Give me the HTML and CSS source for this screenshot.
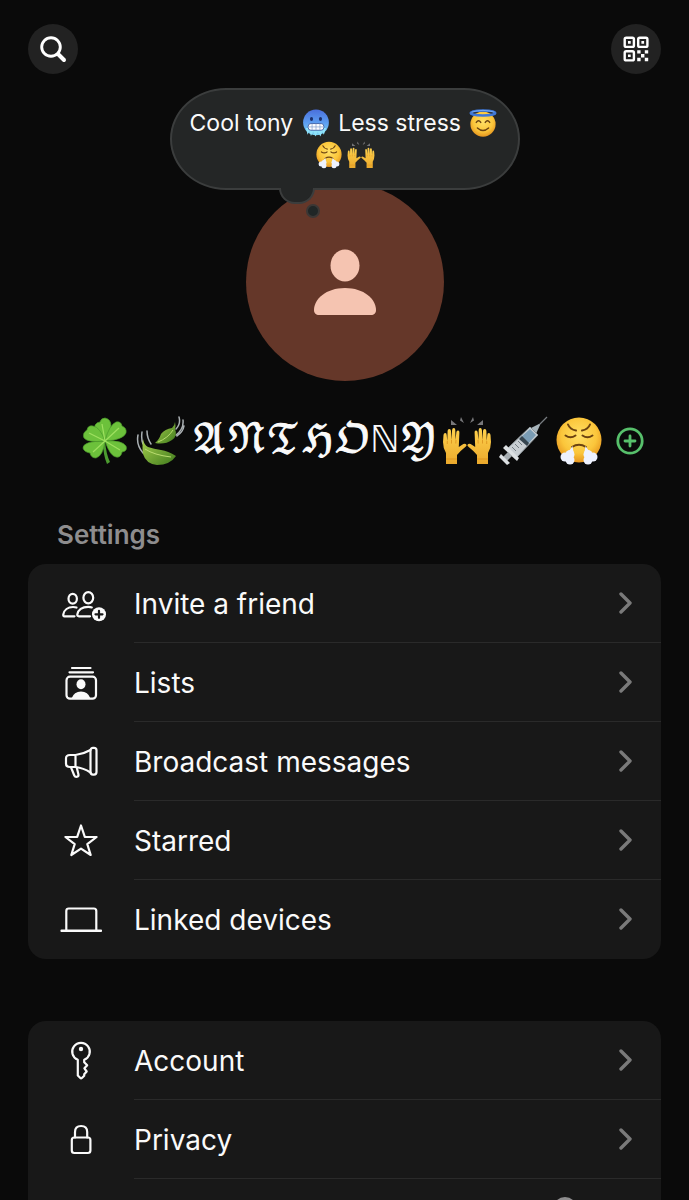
FILE: index.html
```html
<!DOCTYPE html>
<html lang="en">
<head>
    <meta charset="UTF-8">
    <meta name="viewport" content="width=device-width, initial-scale=1.0">
    <title>Settings</title>
    <link rel="stylesheet" href="styles.css">
</head>
<body>
    <!-- Shared drawings -->
    <svg class="sprite" aria-hidden="true">
        <defs>
            <radialGradient id="face" cx="50%" cy="40%" r="60%">
                <stop offset="0" stop-color="#ffe066"/>
                <stop offset=".65" stop-color="#fbc63b"/>
                <stop offset="1" stop-color="#e6951f"/>
            </radialGradient>
            <linearGradient id="cold" x1="0" y1="0" x2="0" y2="1">
                <stop offset="0" stop-color="#4a6fdc"/>
                <stop offset=".5" stop-color="#5c9cf0"/>
                <stop offset="1" stop-color="#7ed8f5"/>
            </linearGradient>
            <linearGradient id="leaf" x1="0" y1="0" x2="1" y2="1">
                <stop offset="0" stop-color="#a5cf4c"/>
                <stop offset="1" stop-color="#3f7a1d"/>
            </linearGradient>
            <linearGradient id="hand" x1="0" y1="0" x2="0" y2="1">
                <stop offset="0" stop-color="#ffd24d"/>
                <stop offset="1" stop-color="#eba92c"/>
            </linearGradient>
        </defs>
        <symbol id="triumph" viewBox="0 0 50 50">
            <circle cx="25" cy="24" r="22.500" fill="url(#face)"/>
            <g fill="none" stroke="#6b4210" stroke-width="2" stroke-linecap="round">
                <path d="M14 8.500q2 5 8 6M36 8.500q-2 5-8 6"/>
                <path d="M11.500 19.500q5 3.500 10 0M28.500 19.500q5 3.500 10 0"/>
                <path d="M18 31q7-4.500 14 0"/>
            </g>
            <g fill="#eef2ff">
                <path d="M18.500 30l1.500 9-7-1z"/>
                <path d="M31.500 30l-1.500 9 7-1z"/>
                <circle cx="11" cy="41" r="4.500"/><circle cx="16" cy="38.500" r="4.500"/><circle cx="16" cy="44" r="4.500"/>
                <circle cx="39" cy="41" r="4.500"/><circle cx="34" cy="38.500" r="4.500"/><circle cx="34" cy="44" r="4.500"/>
            </g>
        </symbol>
        <symbol id="hands" viewBox="0 0 50 50">
            <g fill="#77777a">
                <path d="M9 4l6 5-6 0zM19 1l3 6-4-2.500zM31 1l-3 6 4-2.500zM41 4l-6 5 6 0z"/>
            </g>
            <g id="hand-left">
                <path d="M4 48V37Q1 32 1 26l.5-7q.2-2 1.700-2t1.500 2l.6 6 .3-10q.1-2 1.700-2T9 15l.5 9 .6-10q.2-2 1.700-2t1.500 2l.2 10 .9-8q.3-1.800 1.700-1.600 1.400.2 1.300 2L16.800 31l3-2q3-2 4.500-.5 1 1.200-1 2.500-4 3-8.300 8v9z" fill="url(#hand)"/>
                <path d="M5.300 25v3M9.500 24v3.500M14 24l-.2 3.500M4 43h11" fill="none" stroke="#d98f1d" stroke-width=".8"/>
            </g>
            <use href="#hand-left" transform="translate(50 0) scale(-1 1)"/>
        </symbol>
    </svg>

    <main class="screen">
        <header class="topbar">
            <button class="round-btn" type="button" aria-label="Search">
                <svg width="28" height="28" viewBox="0 0 28 28" fill="none" stroke="#fff" stroke-linecap="round">
                    <circle cx="12" cy="12" r="9.300" stroke-width="2.900"/>
                    <path d="M19.500 19.500l5.500 5.500" stroke-width="4"/>
                </svg>
            </button>
            <button class="round-btn" type="button" aria-label="QR code">
                <svg width="26" height="26" viewBox="0 0 26 26">
                    <g fill="none" stroke="#fff" stroke-width="2.400">
                        <rect x="1.700" y="1.700" width="9.200" height="9.200" rx="1.500"/>
                        <rect x="15.200" y="1.700" width="9.200" height="9.200" rx="1.500"/>
                        <rect x="1.700" y="15.200" width="9.200" height="9.200" rx="1.500"/>
                    </g>
                    <path fill="#fff" d="M5 5h2.700v2.700H5zM18.400 5h2.700v2.700h-2.700zM5 18.400h2.700v2.700H5zM14.200 14.200h3.400v3.400h-3.400zM21.800 14.200h3.400v3.400h-3.400zM18 18h3.400v3.400H18zM14.200 21.800h3.400v3.400h-3.400zM21.800 21.800h3.400v3.400h-3.400z"/>
                </svg>
            </button>
        </header>

        <section class="profile">
            <div class="bubble">
                <p>Cool tony
                    <svg class="emoji" viewBox="0 0 50 50" role="img" aria-label="cold face">
                        <circle cx="25" cy="24" r="23" fill="url(#cold)"/>
                        <ellipse cx="17" cy="18" rx="2.800" ry="3.500" fill="#1c2f6b"/>
                        <ellipse cx="33" cy="18" rx="2.800" ry="3.500" fill="#1c2f6b"/>
                        <path d="M7 34l3 12 3-7 3 9 4-8 4 9 4-8 5 8 3-9 3 6 4-12z" fill="#8fe3fa"/>
                        <rect x="11" y="26" width="28" height="12" rx="5" fill="#fff" stroke="#35569e" stroke-width="1.500"/>
                        <path d="M11 32h28M18 26v12M25 26v12M32 26v12" stroke="#7d99c9" stroke-width="1.200"/>
                    </svg>
                    Less stress
                    <svg class="emoji" viewBox="0 0 50 50" role="img" aria-label="smiling face with halo">
                        <circle cx="25" cy="27" r="22.500" fill="url(#face)"/>
                        <ellipse cx="25" cy="7" rx="22" ry="4.500" fill="none" stroke="#3f78d8" stroke-width="4.500"/>
                        <path d="M5 5.500q20-6 40 0" fill="none" stroke="#7fb2f5" stroke-width="1.500"/>
                        <g fill="none" stroke="#6b4210" stroke-width="2.500" stroke-linecap="round">
                            <path d="M13 24q4-6 8 0M29 24q4-6 8 0M15 34q10 9 20 0"/>
                        </g>
                    </svg>
                    <svg class="emoji" role="img" aria-label="face with steam from nose"><use href="#triumph"/></svg><svg class="emoji" role="img" aria-label="raising hands"><use href="#hands"/></svg>
                </p>
                <span class="tail"></span>
                <span class="dot"></span>
            </div>
            <div class="avatar">
                <svg width="62" height="66" viewBox="0 0 62 66" fill="#f5c4b1">
                    <ellipse cx="31" cy="16.500" rx="14.500" ry="16"/>
                    <path d="M5 66c-3 0-5-1.500-5-5C0 50 12 39 31 39s31 11 31 22c0 3.500-2 5-5 5z"/>
                </svg>
            </div>
            <div class="name-row">
                <h1 class="name">
                    <svg class="emoji-lg" viewBox="0 0 50 50" role="img" aria-label="four leaf clover">
                        <path d="M25 24q1 14 5 22l-3 2q-4-9-4-23z" fill="#4c9c30"/>
                        <g fill="#6cc13b" stroke="#4a9a2b" stroke-width=".7">
                            <path d="M25 25Q13 17 15 9q2-3 5-3 1-4 5-4 6 1 6 8-1 7-6 15z"/>
                            <path d="M25 25Q29 9 36 6q5-1 6 4 5 2 4 7-3 7-21 8z"/>
                            <path d="M25 25q17-1 21 5 2 5-4 6-1 6-6 5-6-1-11-16z"/>
                            <path d="M25 25q-2 15-9 17-5 0-6-5-6-1-7-5 0-7 22-7z"/>
                            <path d="M25 25Q8 27 4 22q-2-5 3-8 1-5 6-4 7 1 12 15z"/>
                        </g>
                        <path d="M25 25L22 8M25 25l14-13M25 25l15 9M25 25L13 36M25 25L9 17" stroke="#9ee05f" stroke-width="1.200"/>
                    </svg>
                    <svg class="emoji-lg" viewBox="0 0 50 50" role="img" aria-label="leaf fluttering in wind">
                        <g fill="none" stroke="#aab0b3" stroke-width="1.500" stroke-linecap="round">
                            <path d="M2 19q-2 10 5 18M6 16q-1 7 1 12M11 15q0 7 4 13M43 1q2 7-3 12M47 4q1 9-7 15M48 10q-1 6-7 10"/>
                        </g>
                        <path d="M7 23q1 6 5 8 6 2 13 3 7 1 15 6-6 9-19 9-11-1-14-11-1-6 0-15z" fill="url(#leaf)"/>
                        <path d="M39 6q1 4 0 7 3 7-3 11-7 5-17 3 4-3 6-9 4-5 11-6 3-3 3-6z" fill="url(#leaf)"/>
                        <path d="M9 33q9 6 26 8M37 14q-5 8-15 12" fill="none" stroke="#b9dc70"/>
                    </svg>
                    <span class="letters">𝔄𝔑𝔗ℌ𝔒<span class="plain">ℕ</span>𝔜</span>
                    <svg class="emoji-lg" role="img" aria-label="raising hands"><use href="#hands"/></svg>
                    <svg class="emoji-lg" viewBox="0 0 50 50" role="img" aria-label="syringe">
                        <path d="M38 12L49 1" stroke="#777c80" stroke-width="1.200"/>
                        <path d="M33 12l8-4 1 1-4 9z" fill="#a6b3ba"/>
                        <path d="M32 11l8 8-21 22-9-9z" fill="#c8ced2" stroke="#8d969b"/>
                        <path d="M32 13l6 6-9 10-7-7z" fill="#7a9cb4"/>
                        <path d="M24 20l7 7-2 3-8-7z" fill="#36454f"/>
                        <path d="M17 28l4 4M20 25l4 4M14 31l4 4" stroke="#737d83"/>
                        <path d="M8 29l13 13-2 3L5 32z" fill="#dce0e2"/>
                        <path d="M10 36l4 4-5 5-4-4z" fill="#a6adb1"/>
                        <path d="M3 38l9 9-3 2-8-8z" fill="#dce0e2"/>
                    </svg>
                    <svg class="emoji-lg" role="img" aria-label="face with steam from nose"><use href="#triumph"/></svg>
                </h1>
                <button class="add-btn" type="button" aria-label="Add">
                    <svg width="28" height="28" viewBox="0 0 28 28" fill="none" stroke="#57c06b" stroke-width="2.800" stroke-linecap="round">
                        <circle cx="14" cy="14" r="12.200"/>
                        <path d="M14 9v10M9 14h10"/>
                    </svg>
                </button>
            </div>
        </section>

        <h2 class="section-title">Settings</h2>

        <ul class="card">
            <li>
                <a class="row" href="#invite">
                    <svg class="icon" viewBox="0 0 50 40">
                        <ellipse cx="16.700" cy="14.700" rx="4.200" ry="4.900"/>
                        <ellipse cx="32.300" cy="13.700" rx="4.900" ry="5.600"/>
                        <path d="M18.500 32.300H8.500Q7 32.300 7.300 30.500C8 26 12 23 17 23q2 0 3.500.6"/>
                        <path d="M34 32.300H23Q21 32.300 21.300 30.500C22 26 26 22.800 32.300 22.800q2 0 3.500.6"/>
                        <circle class="solid" cx="43" cy="30.300" r="7"/>
                        <path class="cut" d="M43 26.800v7M39.500 30.300h7"/>
                    </svg>
                    <span class="label">Invite a friend</span>
                    <svg class="chevron" viewBox="0 0 14 24"><path d="M2 3l9 9-9 9"/></svg>
                </a>
            </li>
            <li>
                <a class="row" href="#lists">
                    <svg class="icon" viewBox="0 0 50 40">
                        <path d="M16 5h18.500M13.500 9.300h23.500"/>
                        <rect x="10.500" y="13.700" width="29.500" height="22" rx="3.500"/>
                        <ellipse class="solid" cx="25" cy="21.300" rx="4.500" ry="5"/>
                        <path class="solid" d="M15.500 35.500q2.500-7 9.500-7t9.500 7z"/>
                    </svg>
                    <span class="label">Lists</span>
                    <svg class="chevron" viewBox="0 0 14 24"><path d="M2 3l9 9-9 9"/></svg>
                </a>
            </li>
            <li>
                <a class="row" href="#broadcast">
                    <svg class="icon" viewBox="0 0 50 40">
                        <path d="M19.500 13h-5.500q-4 0-4 3.500v5q0 3.500 4 3.500h5.500zM19.500 13q8-1 15-5M19.500 25q8 1 15 5.500"/>
                        <rect x="34.500" y="5.800" width="6" height="26.800" rx="2.500"/>
                        <path d="M15 25.300l3.300 8.200q.8 1.700 2.800 1.200 1.800-.6 1.300-2.500l-1.600-6.500"/>
                    </svg>
                    <span class="label">Broadcast messages</span>
                    <svg class="chevron" viewBox="0 0 14 24"><path d="M2 3l9 9-9 9"/></svg>
                </a>
            </li>
            <li>
                <a class="row" href="#starred">
                    <svg class="icon" viewBox="0 0 50 40">
                        <path d="M25 4.500l3.800 11.300 11.800.2-9.300 7.200 3.400 10.800L25 27.600 15.300 34l3.400-10.800L9.400 16l11.800-.2z"/>
                    </svg>
                    <span class="label">Starred</span>
                    <svg class="chevron" viewBox="0 0 14 24"><path d="M2 3l9 9-9 9"/></svg>
                </a>
            </li>
            <li>
                <a class="row" href="#devices">
                    <svg class="icon" viewBox="0 0 50 40">
                        <path d="M10.300 30V11q0-2.500 2.500-2.500h25q2.500 0 2.500 2.500v19"/>
                        <path d="M5.500 30.500h39.500M5.500 31h39.500"/>
                    </svg>
                    <span class="label">Linked devices</span>
                    <svg class="chevron" viewBox="0 0 14 24"><path d="M2 3l9 9-9 9"/></svg>
                </a>
            </li>
        </ul>

        <ul class="card">
            <li>
                <a class="row" href="#account">
                    <svg class="icon" viewBox="0 0 50 40">
                        <path d="M21.800 18.800a8.800 8.800 0 1 1 6.400 0v2.500l3 3-2.800 3 2.300 3.200-2.500 2.800v1.500l-2.300 2.200q-.9.700-1.800-.2l-2.300-2.300z"/>
                        <circle class="solid" cx="25" cy="8" r="2.200"/>
                    </svg>
                    <span class="label">Account</span>
                    <svg class="chevron" viewBox="0 0 14 24"><path d="M2 3l9 9-9 9"/></svg>
                </a>
            </li>
            <li>
                <a class="row" href="#privacy">
                    <svg class="icon" viewBox="0 0 50 40">
                        <rect x="15.800" y="17.500" width="18.600" height="15.500" rx="2.500"/>
                        <path d="M19 17.500V12q0-6 6.100-6t6.100 6v5.500"/>
                    </svg>
                    <span class="label">Privacy</span>
                    <svg class="chevron" viewBox="0 0 14 24"><path d="M2 3l9 9-9 9"/></svg>
                </a>
            </li>
            <li class="row">
                <span class="status"></span>
            </li>
        </ul>
    </main>
</body>
</html>
```
FILE: styles.css
```css
* {
    box-sizing: border-box;
}

body {
    margin: 0;
    background: #0a0a0a;
    color: #fafafa;
    font-family: Inter, "Liberation Sans", sans-serif;
}

.sprite {
    position: absolute;
    width: 0;
    height: 0;
}

.screen {
    height: 100vh;
    overflow: hidden;
    padding: 24px 28px 0;
}

button {
    border: none;
    padding: 0;
    background: none;
    cursor: pointer;
}

.topbar {
    display: flex;
    justify-content: space-between;
}

.round-btn {
    display: flex;
    align-items: center;
    justify-content: center;
    width: 50px;
    height: 50px;
    border-radius: 50%;
    background: #222;
}

/* Profile */
.profile {
    display: flex;
    flex-direction: column;
    align-items: center;
    padding-top: 14px;
}

.bubble {
    position: relative;
    z-index: 1;
    width: 350px;
    padding: 17px 16px;
    border: 2px solid #3b3d3d;
    border-radius: 56px / 51px;
    background: #242626;
}

.bubble p {
    margin: 0;
    text-align: center;
    font-size: 23px;
    line-height: 32px;
}

.emoji {
    width: 28px;
    height: 28px;
    margin: 0 2px;
    vertical-align: -6px;
}

.tail {
    position: absolute;
    top: 98px;
    left: 107px;
    width: 36px;
    height: 16px;
    border: 2px solid #3b3d3d;
    border-top: none;
    border-radius: 0 0 18px 18px;
    background: #242626;
}

.dot {
    position: absolute;
    top: 114px;
    left: 134px;
    width: 14px;
    height: 14px;
    border: 2px solid #3b3735;
    border-radius: 50%;
    background: #202626;
}

.avatar {
    display: flex;
    align-items: center;
    justify-content: center;
    width: 198px;
    height: 198px;
    margin-top: -7px;
    border-radius: 50%;
    background: #653729;
}

.name-row {
    display: flex;
    align-items: center;
    align-self: flex-end;
    gap: 12px;
    height: 60px;
    margin: 30px 17px 0 0;
}

.name {
    display: flex;
    align-items: center;
    gap: 6px;
    margin: 0;
    font-size: 37px;
    font-weight: normal;
    line-height: 60px;
}

.emoji-lg {
    width: 50px;
    height: 50px;
}

.letters {
    font-family: "DejaVu Math TeX Gyre", "DejaVu Sans", serif;
    white-space: nowrap;
    -webkit-text-stroke: 1px #fafafa;
}

.letters .plain {
    font-family: "DejaVu Sans", sans-serif;
    -webkit-text-stroke: 0;
}

.add-btn {
    display: flex;
}

/* Settings list */
.section-title {
    margin: 48px 0 13px 29px;
    color: #8e8d8e;
    font-size: 26px;
    font-weight: 600;
    line-height: 32px;
}

.card {
    margin: 0 0 62px;
    padding: 0;
    border-radius: 18px;
    background: #181818;
    list-style: none;
    overflow: hidden;
}

.row {
    display: flex;
    align-items: center;
    height: 79px;
    padding-left: 28px;
    color: inherit;
    text-decoration: none;
}

.icon {
    width: 50px;
    height: 40px;
    margin-right: 28px;
    fill: none;
    stroke: #fafafa;
    stroke-width: 2.2;
    stroke-linecap: round;
    stroke-linejoin: round;
}

.icon .solid {
    fill: #fafafa;
    stroke: none;
}

.icon .cut {
    stroke: #181818;
}

.label {
    flex: 1;
    padding-top: 2px;
    border-bottom: 1px solid #2a2a2a;
    font-size: 28px;
    line-height: 76px;
}

.chevron {
    align-self: stretch;
    width: 42px;
    height: 79px;
    padding-right: 28px;
    border-bottom: 1px solid #2a2a2a;
    fill: none;
    stroke: #7a7a7a;
    stroke-width: 3.4;
    stroke-linecap: round;
    stroke-linejoin: round;
}

.card li:last-child .label,
.card li:last-child .chevron {
    border-bottom-color: transparent;
}

.card li.row {
    align-items: flex-start;
}

.status {
    width: 24px;
    height: 24px;
    margin: 18px 84px 0 auto;
    border-radius: 50%;
    background: #8e8d8e;
}
```
